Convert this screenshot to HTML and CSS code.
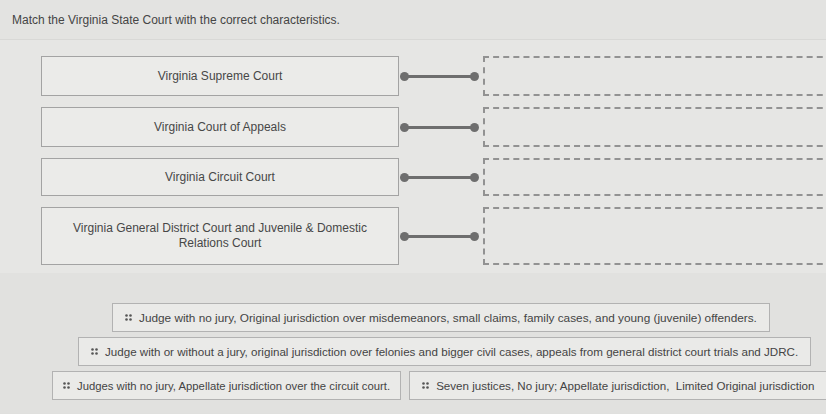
FILE: index.html
```html
<!DOCTYPE html>
<html>
<head>
<meta charset="utf-8">
<link rel="stylesheet" href="styles.css">
</head>
<body>
<div class="page">
  <div class="prompt">Match the Virginia State Court with the correct characteristics.</div>
  <div class="matches">
    <div class="row r1">
      <div class="term">Virginia Supreme Court</div>
      <div class="link"><span class="dot"></span><span class="bar"></span><span class="dot"></span></div>
      <div class="slot"></div>
    </div>
    <div class="row r2">
      <div class="term">Virginia Court of Appeals</div>
      <div class="link"><span class="dot"></span><span class="bar"></span><span class="dot"></span></div>
      <div class="slot"></div>
    </div>
    <div class="row r3">
      <div class="term">Virginia Circuit Court</div>
      <div class="link"><span class="dot"></span><span class="bar"></span><span class="dot"></span></div>
      <div class="slot"></div>
    </div>
    <div class="row r4">
      <div class="term">Virginia General District Court and Juvenile &amp; Domestic<br>Relations Court</div>
      <div class="link"><span class="dot"></span><span class="bar"></span><span class="dot"></span></div>
      <div class="slot"></div>
    </div>
  </div>
  <div class="bank">
    <div class="chiprow c1">
      <div class="chip"><svg class="grip" width="7" height="7" viewBox="0 0 7 7"><circle cx="1.5" cy="1.5" r="1.3"/><circle cx="5.5" cy="1.5" r="1.3"/><circle cx="1.5" cy="5.5" r="1.3"/><circle cx="5.5" cy="5.5" r="1.3"/></svg>Judge with no jury, Original jurisdiction over misdemeanors, small claims, family cases, and young (juvenile) offenders.</div>
    </div>
    <div class="chiprow c2">
      <div class="chip"><svg class="grip" width="7" height="7" viewBox="0 0 7 7"><circle cx="1.5" cy="1.5" r="1.3"/><circle cx="5.5" cy="1.5" r="1.3"/><circle cx="1.5" cy="5.5" r="1.3"/><circle cx="5.5" cy="5.5" r="1.3"/></svg>Judge with or without a jury, original jurisdiction over felonies and bigger civil cases, appeals from general district court trials and JDRC.</div>
    </div>
    <div class="chiprow c3">
      <div class="chip"><svg class="grip" width="7" height="7" viewBox="0 0 7 7"><circle cx="1.5" cy="1.5" r="1.3"/><circle cx="5.5" cy="1.5" r="1.3"/><circle cx="1.5" cy="5.5" r="1.3"/><circle cx="5.5" cy="5.5" r="1.3"/></svg>Judges with no jury, Appellate jurisdiction over the circuit court.</div>
      <div class="chip wide"><svg class="grip" width="7" height="7" viewBox="0 0 7 7"><circle cx="1.5" cy="1.5" r="1.3"/><circle cx="5.5" cy="1.5" r="1.3"/><circle cx="1.5" cy="5.5" r="1.3"/><circle cx="5.5" cy="5.5" r="1.3"/></svg>Seven justices, No jury; Appellate jurisdiction,&nbsp; Limited Original jurisdiction</div>
    </div>
  </div>
</div>
</body>
</html>
```

FILE: styles.css
```css
html, body {
  margin: 0;
  padding: 0;
}
body {
  width: 826px;
  height: 414px;
  overflow: hidden;
  background: #e0e0de;
  font-family: "Liberation Sans", Arial, sans-serif;
  color: #454545;
}
.page {
  display: flex;
  flex-direction: column;
}
.prompt {
  font-size: 12px;
  line-height: 14px;
  padding: 13px 0 0 12px;
  height: 40px;
  box-sizing: border-box;
  border-bottom: 1px solid #d8d8d6;
  background: #e3e3e1;
}
.matches {
  background: #e6e6e4;
  padding: 16px 0 8px 41px;
  display: flex;
  flex-direction: column;
  gap: 11px;
}
.row {
  display: flex;
  align-items: center;
  height: 40px;
}
.row.r3 { height: 38px; }
.row.r4 { height: 58px; }
.term {
  flex: none;
  width: 358px;
  height: 100%;
  box-sizing: border-box;
  border: 1px solid #a3a3a3;
  background: #ebebe9;
  display: flex;
  align-items: center;
  justify-content: center;
  text-align: center;
  font-size: 12px;
  line-height: 15px;
  color: #474747;
}
.link {
  flex: none;
  width: 82px;
  display: flex;
  align-items: center;
  padding: 0 2px 0 1px;
  box-sizing: border-box;
}
.dot {
  width: 9px;
  height: 9px;
  border-radius: 50%;
  background: #6e6e6e;
  flex: none;
}
.bar {
  flex: 1;
  height: 3px;
  background: #6e6e6e;
  margin: 0 -1px;
}
.slot {
  width: 360px;
  height: 100%;
  box-sizing: border-box;
  border: 2px dashed #929292;
  border-right: none;
  margin-left: 2px;
  flex: none;
}
.bank {
  background: #e1e1df;
  padding: 30px 0 0 0;
  display: flex;
  flex-direction: column;
  gap: 5px;
  height: 140px;
  box-sizing: border-box;
}
.chiprow {
  display: flex;
  gap: 8px;
}
.c1 { padding-left: 112px; }
.c2 { padding-left: 78px; }
.c3 { padding-left: 52px; }
.chip {
  flex: none;
  display: flex;
  align-items: center;
  gap: 7px;
  height: 29px;
  box-sizing: border-box;
  padding: 0 12px;
  border: 1px solid #b2b2b2;
  background: #eaeae8;
  font-size: 11.8px;
  color: #444;
  white-space: nowrap;
}
.c2 .chip { font-size: 11.6px; }
.c3 .chip { font-size: 11.3px; padding: 0 10px; }
.c3 .chip.wide { font-size: 11.6px; padding: 0 12px; }
.grip {
  fill: #555;
  flex: none;
}
```
